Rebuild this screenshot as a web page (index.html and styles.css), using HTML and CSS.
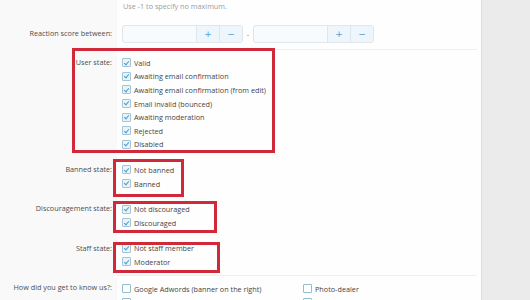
FILE: index.html
```html
<!DOCTYPE html>
<html lang="en">
<head>
<meta charset="utf-8">
<title>User search criteria</title>
<link rel="stylesheet" href="styles.css">
</head>
<body>
<div class="page">
  <main class="form">
    <div class="row hint-row">
      <div class="lbl"></div>
      <div class="ctl"><span class="hint">Use -1 to specify no maximum.</span></div>
    </div>
    <div class="row range-row">
      <div class="lbl">Reaction score between:</div>
      <div class="ctl">
        <div class="range">
          <div class="spin"><span class="field"></span><span class="btn">+</span><span class="btn">&minus;</span></div>
          <span class="dash">-</span>
          <div class="spin"><span class="field"></span><span class="btn">+</span><span class="btn">&minus;</span></div>
        </div>
      </div>
    </div>
    <div class="row chk-row">
      <div class="lbl">User state:</div>
      <div class="ctl">
        <label class="item"><span class="box on"></span>Valid</label>
        <label class="item"><span class="box on"></span>Awaiting email confirmation</label>
        <label class="item"><span class="box on"></span>Awaiting email confirmation (from edit)</label>
        <label class="item"><span class="box on"></span>Email invalid (bounced)</label>
        <label class="item"><span class="box on"></span>Awaiting moderation</label>
        <label class="item"><span class="box on"></span>Rejected</label>
        <label class="item"><span class="box on"></span>Disabled</label>
      </div>
    </div>
    <div class="row chk-row">
      <div class="lbl">Banned state:</div>
      <div class="ctl">
        <label class="item"><span class="box on"></span>Not banned</label>
        <label class="item"><span class="box on"></span>Banned</label>
      </div>
    </div>
    <div class="row chk-row">
      <div class="lbl">Discouragement state:</div>
      <div class="ctl">
        <label class="item"><span class="box on"></span>Not discouraged</label>
        <label class="item"><span class="box on"></span>Discouraged</label>
      </div>
    </div>
    <div class="row chk-row">
      <div class="lbl">Staff state:</div>
      <div class="ctl">
        <label class="item"><span class="box on"></span>Not staff member</label>
        <label class="item"><span class="box on"></span>Moderator</label>
      </div>
    </div>
    <div class="row chk-row sep-top">
      <div class="lbl">How did you get to know us?:</div>
      <div class="ctl cols">
        <label class="item"><span class="box"></span>Google Adwords (banner on the right)</label>
        <label class="item"><span class="box"></span>Photo-dealer</label>
        <label class="item"><span class="box"></span>Search engine</label>
        <label class="item"><span class="box"></span>Advertisement in a magazine</label>
      </div>
    </div>

    <div class="mark m1"></div>
    <div class="mark m2"></div>
    <div class="mark m3"></div>
    <div class="mark m4"></div>
  </main>
  <aside class="side"></aside>
</div>
</body>
</html>
```

FILE: styles.css
```css
html, body {
  margin: 0;
  padding: 0;
}
body {
  font-family: "Open Sans", "Noto Sans", sans-serif;
  font-size: 7.25px;
  color: #444;
  background: #ebebeb;
}
.page {
  display: flex;
  height: 300px;
  overflow: hidden;
}
.form {
  position: relative;
  width: 477px;
  padding-right: 4px;
  background: #fefefe;
  border-right: 1px solid #dcdcdc;
  flex: none;
}
.side {
  flex: 1;
  background: #ebebeb;
}
.row {
  display: grid;
  grid-template-columns: 117px 1fr;
}
.lbl {
  background: #f9f9f9;
  text-align: right;
  padding-right: 5px;
  color: #4d4d4d;
  line-height: 13.6px;
  white-space: nowrap;
}
.ctl {
  padding-left: 5px;
}

.hint-row .ctl {
  line-height: 12px;
  padding: 0 0 5px 6px;
}
.hint {
  color: #9c9c9c;
}

.range-row .lbl {
  padding-top: 10px;
}
.range-row .ctl {
  padding-top: 8px;
  padding-bottom: 6px;
  border-bottom: 1px solid #eceff2;
}
.range {
  display: flex;
  align-items: center;
}
.spin {
  display: flex;
  width: 119px;
  height: 16px;
  border: 1px solid #dfe6ec;
  border-radius: 3px;
  background: #f8fbfe;
  overflow: hidden;
}
.spin .field {
  flex: 1;
}
.spin .btn {
  width: 22px;
  border-left: 1px solid #dfe6ec;
  background: #eef5fb;
  color: #4f9fd8;
  display: flex;
  align-items: center;
  justify-content: center;
  font-size: 9px;
  font-family: "DejaVu Sans", sans-serif;
}
.dash {
  width: 10px;
  text-align: center;
  color: #777;
}

.chk-row .lbl {
  padding-top: 6px;
}
.chk-row .ctl {
  padding-top: 6px;
  padding-bottom: 6px;
}
.item {
  display: flex;
  align-items: center;
  height: 13.6px;
  white-space: nowrap;
}
.box {
  position: relative;
  box-sizing: border-box;
  width: 9px;
  height: 9px;
  margin-right: 3px;
  border: 1px solid #93bccf;
  border-radius: 1px;
  background: #fff;
  flex: none;
}
.box.on {
  background: #e9f3f8;
  border-color: #a2c6d8;
}
.box.on::after {
  content: "";
  position: absolute;
  left: 2.2px;
  top: 0.3px;
  width: 2px;
  height: 4px;
  border-right: 1px solid #4b9ec7;
  border-bottom: 1px solid #4b9ec7;
  transform: rotate(40deg);
}

.sep-top .ctl {
  border-top: 1px solid #eceff2;
}
.cols {
  display: grid;
  grid-template-columns: 181px 1fr;
}

.mark {
  position: absolute;
  border: 3px solid #d02a3a;
  pointer-events: none;
}
.m1 { left: 72px;  top: 48px;  width: 197px; height: 99px; }
.m2 { left: 113px; top: 159px; width: 65px;  height: 32px; }
.m3 { left: 113px; top: 201px; width: 98px;  height: 26px; }
.m4 { left: 113px; top: 242px; width: 101px; height: 25px; }
```
